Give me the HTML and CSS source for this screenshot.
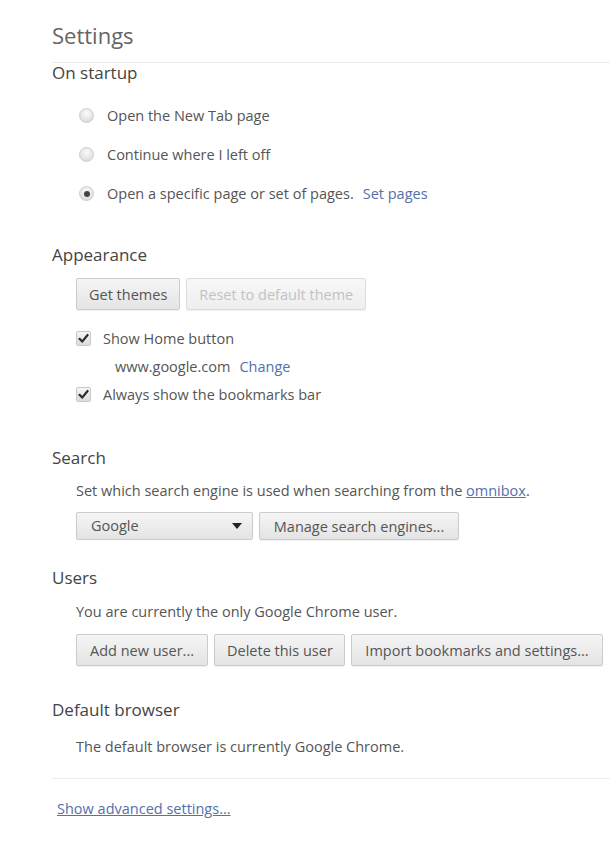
FILE: index.html
```html
<!DOCTYPE html>
<html lang="en">
<head>
    <meta charset="UTF-8">
    <meta name="viewport" content="width=device-width, initial-scale=1.0">
    <title>Settings</title>
    <link rel="stylesheet" href="styles.css">
</head>
<body>
    <div class="page">
        <header class="page-header">
            <h1>Settings</h1>
        </header>

        <section class="section section-startup">
            <h3>On startup</h3>
            <div class="section-body radio-list">
                <label class="radio-row"><span class="radio"></span>Open the New Tab page</label>
                <label class="radio-row"><span class="radio"></span>Continue where I left off</label>
                <label class="radio-row"><span class="radio checked"></span>Open a specific page or set of pages.<a class="link" href="#">Set pages</a></label>
            </div>
        </section>

        <section class="section section-appearance">
            <h3>Appearance</h3>
            <div class="section-body">
                <div class="button-row">
                    <button class="btn">Get themes</button>
                    <button class="btn" disabled>Reset to default theme</button>
                </div>
                <div class="check-list">
                    <label class="check-row">
                        <span class="checkbox">
                            <svg width="11" height="11" viewBox="0 0 11 11"><path d="M1.5 5.8 L4.2 8.6 L9.6 2" fill="none" stroke="#2b2b2b" stroke-width="2.2" stroke-linecap="round" stroke-linejoin="round"/></svg>
                        </span>Show Home button
                    </label>
                    <div class="home-url">www.google.com<a class="link" href="#">Change</a></div>
                    <label class="check-row">
                        <span class="checkbox">
                            <svg width="11" height="11" viewBox="0 0 11 11"><path d="M1.5 5.8 L4.2 8.6 L9.6 2" fill="none" stroke="#2b2b2b" stroke-width="2.2" stroke-linecap="round" stroke-linejoin="round"/></svg>
                        </span>Always show the bookmarks bar
                    </label>
                </div>
            </div>
        </section>

        <section class="section section-search">
            <h3>Search</h3>
            <div class="section-body">
                <p class="note">Set which search engine is used when searching from the <a class="link underline" href="#">omnibox</a>.</p>
                <div class="button-row">
                    <div class="dropdown">
                        <span>Google</span>
                        <span class="caret"></span>
                    </div>
                    <button class="btn btn-manage">Manage search engines...</button>
                </div>
            </div>
        </section>

        <section class="section section-users">
            <h3>Users</h3>
            <div class="section-body">
                <p class="note">You are currently the only Google Chrome user.</p>
                <div class="button-row">
                    <button class="btn btn-user">Add new user...</button>
                    <button class="btn btn-user">Delete this user</button>
                    <button class="btn btn-user">Import bookmarks and settings...</button>
                </div>
            </div>
        </section>

        <section class="section section-default">
            <h3>Default browser</h3>
            <div class="section-body">
                <p class="note">The default browser is currently Google Chrome.</p>
            </div>
        </section>

        <footer class="advanced">
            <a class="link underline" href="#">Show advanced settings...</a>
        </footer>
    </div>
</body>
</html>
```

FILE: styles.css
```css
body {
    margin: 0;
    font-family: "Open Sans", "Noto Sans", sans-serif;
    font-size: 14.5px;
    line-height: 20px;
    color: #555;
    background-color: #fff;
}
.page {
    padding: 23px 0 40px 52px;
}
.page-header {
    padding-bottom: 15px;
    border-bottom: 1px solid #ececec;
}
h1 {
    margin: 0;
    font-size: 22px;
    font-weight: normal;
    line-height: 24px;
    color: #656565;
}
h3 {
    margin: 0;
    font-size: 17px;
    font-weight: normal;
    line-height: 20px;
    color: #444;
}
.section-body {
    padding-left: 24px;
}
.link {
    color: #5470ad;
    text-decoration: none;
    margin-left: 9px;
}
.underline {
    margin-left: 0;
    text-decoration: underline;
}

/* on startup */
.radio-list {
    padding-top: 13px;
    padding-left: 27px;
}
.radio-row {
    display: flex;
    align-items: center;
    height: 39px;
}
.radio {
    width: 15px;
    height: 15px;
    margin-right: 13px;
    border: 1px solid #cdcdcd;
    border-radius: 50%;
    background: radial-gradient(circle at 50% 35%, #fbfbfb, #e0e0e0 70%, #d2d2d2);
    box-sizing: border-box;
    display: flex;
    align-items: center;
    justify-content: center;
}
.radio.checked::after {
    content: "";
    width: 6px;
    height: 6px;
    border-radius: 50%;
    background: #444;
}
.section-appearance {
    margin-top: 32px;
}

/* buttons */
.button-row {
    display: flex;
    gap: 6px;
    margin-top: 13px;
}
.btn {
    height: 32px;
    padding: 0 12px;
    white-space: nowrap;
    font-family: inherit;
    font-size: 14.5px;
    color: #555;
    background: linear-gradient(#f5f5f5, #e4e4e4);
    border: 1px solid #cbcbcb;
    border-radius: 2px;
    box-shadow: 0 1px 0 rgba(0, 0, 0, 0.06);
}
.btn:disabled {
    color: #c2c2c2;
    background: linear-gradient(#f8f8f8, #eeeeee);
    border-color: #dcdcdc;
}

/* appearance checkboxes */
.check-list {
    margin-top: 15px;
}
.check-row {
    display: flex;
    align-items: center;
    height: 27px;
}
.checkbox {
    width: 15px;
    height: 15px;
    margin-right: 12px;
    border: 1px solid #c9c9c9;
    border-radius: 2px;
    background: linear-gradient(#f6f6f6, #dadada);
    box-sizing: border-box;
    display: flex;
    align-items: center;
    justify-content: center;
}
.home-url {
    height: 29px;
    line-height: 29px;
    padding-left: 39px;
}

/* search */
.section-search {
    margin-top: 40px;
}
.section-search .note {
    margin: 13px 0 0;
}
.section-search .button-row {
    margin-top: 11px;
}
.dropdown {
    width: 177px;
    height: 28px;
    box-sizing: border-box;
    padding: 0 10px 0 14px;
    display: flex;
    align-items: center;
    justify-content: space-between;
    background: linear-gradient(#f5f5f5, #e4e4e4);
    border: 1px solid #cbcbcb;
    border-radius: 2px;
    color: #555;
}
.caret {
    width: 0;
    height: 0;
    border-left: 5px solid transparent;
    border-right: 5px solid transparent;
    border-top: 6px solid #222;
}
.btn-manage {
    height: 28px;
    width: 200px;
}

/* users */
.section-users {
    margin-top: 28px;
}
.section-users .note {
    margin: 14px 0 0;
}
.section-users .button-row {
    margin-top: 12px;
}
.btn-user:nth-child(1) { width: 132px; }
.btn-user:nth-child(2) { width: 131px; }
.btn-user:nth-child(3) { width: 252px; }

/* default browser */
.section-default {
    margin-top: 34px;
    padding-bottom: 21px;
    border-bottom: 1px solid #ececec;
}
.section-default .note {
    margin: 17px 0 0;
}

.advanced {
    margin-top: 20px;
    padding-left: 5px;
}
```
